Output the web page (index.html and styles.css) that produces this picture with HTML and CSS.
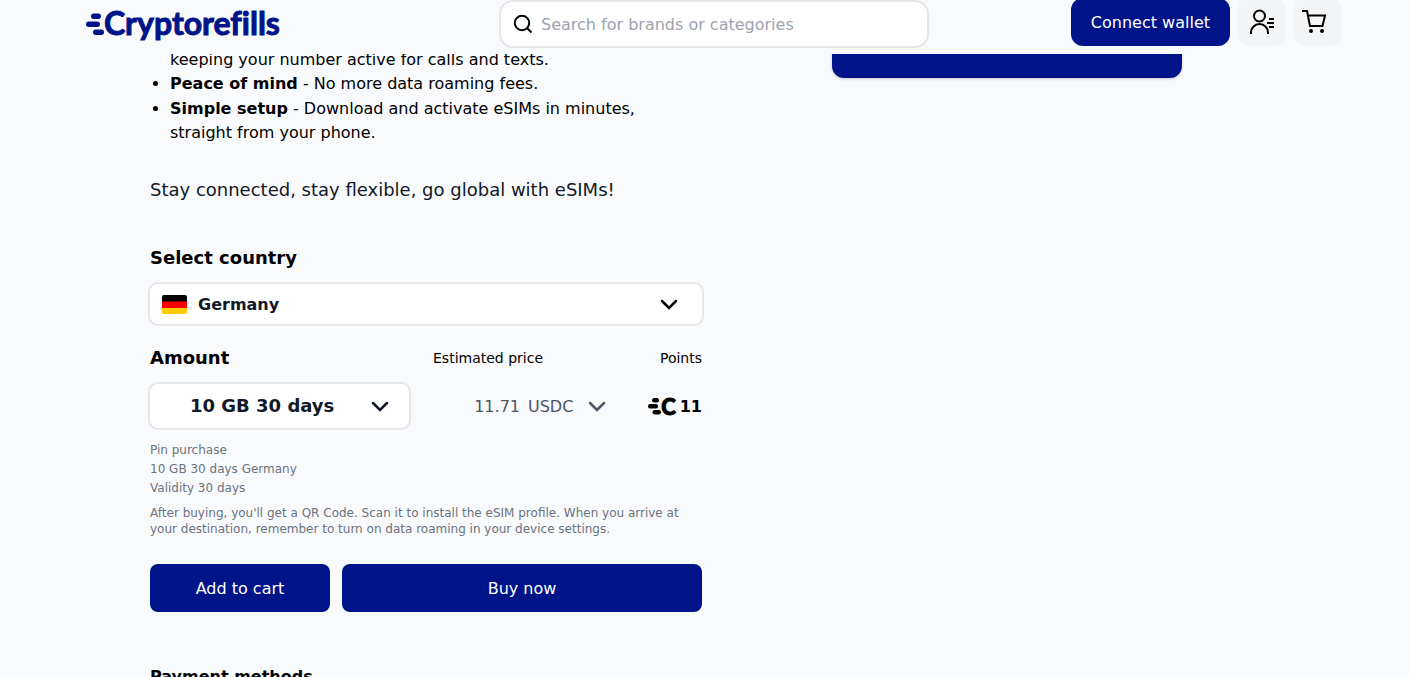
FILE: index.html
```html
<!DOCTYPE html>
<html lang="en">
<head>
    <meta charset="UTF-8">
    <meta name="viewport" content="width=device-width, initial-scale=1.0">
    <title>eSIM Germany - Cryptorefills</title>
    <link rel="stylesheet" href="styles.css">
</head>
<body>

    <!-- Header -->
    <header class="header">
        <a href="#" class="logo">
            <svg class="logo-bars" width="18" height="24" viewBox="0 0 18 24" aria-hidden="true">
                <rect x="5" y="1.500" width="10" height="5.500" rx="2.750"/>
                <rect x="0" y="9.500" width="14" height="5.500" rx="2.750"/>
                <rect x="7" y="17.500" width="11" height="5.500" rx="2.750"/>
            </svg>
            <span class="logo-text">Cryptorefills</span>
        </a>

        <form class="search">
            <svg width="20" height="20" viewBox="0 0 20 20" aria-hidden="true">
                <circle cx="9" cy="9" r="7.200"/>
                <path d="M14.500 14.500L18.500 18.500"/>
            </svg>
            <input type="search" aria-label="Search" placeholder="Search for brands or categories">
        </form>

        <div class="actions">
            <button class="btn btn-wallet">Connect wallet</button>
            <button class="btn-icon" aria-label="Account">
                <svg width="28" height="28" viewBox="0 0 28 28" aria-hidden="true">
                    <circle cx="11.500" cy="8" r="5.500"/>
                    <path d="M3 26v-1.500a8.500 8.500 0 0 1 17 0V26"/>
                    <path d="M21 11h5M19 15h7M21 19h5"/>
                </svg>
            </button>
            <button class="btn-icon" aria-label="Cart">
                <svg width="32" height="32" viewBox="0 0 32 32" aria-hidden="true">
                    <path d="M0 5h5l3 15h12.500L23 9.500H6"/>
                    <circle class="wheel" cx="9" cy="25" r="2"/>
                    <circle class="wheel" cx="20" cy="25" r="2"/>
                </svg>
            </button>
        </div>
    </header>

    <main class="container">
        <section class="product">
            <ul class="benefits">
                <li class="continued">keeping your number active for calls and texts.</li>
                <li><strong>Peace of mind</strong> - No more data roaming fees.</li>
                <li><strong>Simple setup</strong> - Download and activate eSIMs in minutes, straight from your phone.</li>
            </ul>
            <p class="tagline">Stay connected, stay flexible, go global with eSIMs!</p>

            <!-- Country -->
            <label class="title" for="country">Select country</label>
            <div class="select-box country">
                <svg class="flag" width="25" height="19" viewBox="0 0 25 19" aria-hidden="true">
                    <clipPath id="flag-clip"><rect width="25" height="19" rx="2"/></clipPath>
                    <g clip-path="url(#flag-clip)">
                        <rect width="25" height="7" fill="#000"/>
                        <rect y="6.500" width="25" height="6.500" fill="#f00"/>
                        <rect y="13" width="25" height="6" fill="#fc0"/>
                    </g>
                </svg>
                <select id="country">
                    <option>Germany</option>
                </select>
                <svg class="chevron" width="18" height="12" viewBox="0 0 18 12" aria-hidden="true"><path d="M2 3l7 7 7-7"/></svg>
            </div>

            <!-- Amount and price -->
            <div class="order">
                <div class="order-amount">
                    <label class="title" for="amount">Amount</label>
                    <div class="select-box amount">
                        <select id="amount">
                            <option>10 GB 30 days</option>
                        </select>
                        <svg class="chevron" width="18" height="12" viewBox="0 0 18 12" aria-hidden="true"><path d="M2 3l7 7 7-7"/></svg>
                    </div>
                </div>
                <div class="order-price">
                    <label class="caption" for="currency">Estimated price</label>
                    <div class="price">
                        <span>11.71</span>
                        <select id="currency">
                            <option>USDC</option>
                        </select>
                        <svg class="chevron" width="18" height="12" viewBox="0 0 18 12" aria-hidden="true"><path d="M2 2l7 7 7-7"/></svg>
                    </div>
                </div>
                <div class="order-points">
                    <span class="caption">Points</span>
                    <div class="points">
                        <svg width="13" height="18" viewBox="0 0 13 18" aria-hidden="true">
                            <rect x="4" y="0" width="7" height="4.500" rx="2.200"/>
                            <rect x="0" y="6" width="10" height="4.500" rx="2.200"/>
                            <rect x="4.500" y="12" width="8.500" height="4.500" rx="2.200"/>
                        </svg>
                        <span class="points-mark">C</span>
                        <span>11</span>
                    </div>
                </div>
            </div>

            <div class="details">
                <p>Pin purchase</p>
                <p>10 GB 30 days Germany</p>
                <p>Validity 30 days</p>
                <p class="details-note">After buying, you'll get a QR Code. Scan it to install the eSIM profile. When you arrive at your destination, remember to turn on data roaming in your device settings.</p>
            </div>

            <div class="buy-row">
                <button class="btn">Add to cart</button>
                <button class="btn">Buy now</button>
            </div>

            <h2 class="payment-title">Payment methods</h2>
        </section>

        <aside class="brand-card"></aside>
    </main>

</body>
</html>
```
FILE: styles.css
```css
* {
    box-sizing: border-box;
}

body {
    font-family: "DejaVu Sans", sans-serif;
    font-size: 16px;
    line-height: 24px;
    margin: 0;
    height: 100vh;
    overflow: hidden;
    color: #000;
    background-color: #f9fafc;
}

p, ul, h2 {
    margin: 0;
    padding: 0;
}

button, input, select {
    font: inherit;
    color: inherit;
}

svg {
    flex-shrink: 0;
}

/* Header */
.header {
    position: fixed;
    top: 0;
    left: 0;
    right: 0;
    z-index: 10;
    display: grid;
    grid-template-columns: 1fr 430px 1fr;
    align-items: start;
    height: 54px;
    padding: 0 67px 0 86px;
    background-color: #f9fafc;
}

.logo {
    display: flex;
    align-items: center;
    height: 48px;
    color: #001489;
    text-decoration: none;
}

.logo-bars {
    fill: #001489;
}

.logo-text {
    font-family: Lato, sans-serif;
    font-size: 32px;
    font-weight: 700;
    font-variant-ligatures: none;
    -webkit-text-stroke: 1px #001489;
    stroke-linejoin: round;
    padding-bottom: 2px;
}

.search {
    display: flex;
    align-items: center;
    gap: 8px;
    height: 48px;
    padding: 0 12px;
    background-color: #fff;
    border: 2px solid #e5e7eb;
    border-radius: 14px;
}

.search svg {
    fill: none;
    stroke: #000;
    stroke-width: 2;
}

.search input {
    flex: 1;
    min-width: 0;
    padding: 2px 0 0;
    border: none;
    outline: none;
    background: none;
}

.search input::placeholder {
    color: #9ca3af;
}

.actions {
    display: flex;
    justify-content: flex-end;
    gap: 8px;
    margin-top: -2px;
}

.btn {
    height: 48px;
    padding: 2px 20px 0;
    background-color: #001489;
    color: #fff;
    border: none;
    border-radius: 8px;
    cursor: pointer;
}

.btn-wallet {
    border-radius: 12px;
}

.btn-icon {
    display: flex;
    align-items: center;
    justify-content: center;
    width: 48px;
    height: 48px;
    padding: 0;
    background-color: #f3f4f6;
    border: none;
    border-radius: 12px;
    cursor: pointer;
}

.btn-icon svg {
    fill: none;
    stroke: #000;
    stroke-width: 2;
}

.btn-icon .wheel {
    fill: #000;
    stroke: none;
}

/* Page */
.container {
    display: grid;
    grid-template-columns: 552px 350px;
    gap: 130px;
    align-items: start;
    max-width: 1109px;
    margin: 0 auto;
    padding-top: 48px;
}

.benefits {
    padding-left: 20px;
}

.benefits li {
    max-width: 480px;
}

.benefits li:last-child {
    margin-top: 1px;
}

.benefits .continued {
    list-style: none;
}

.tagline {
    margin: 31px 0 40px;
    font-size: 18px;
    line-height: 28px;
    color: #111827;
}

.title {
    display: block;
    margin-bottom: 10px;
    font-size: 18px;
    font-weight: 700;
    line-height: 28px;
}

.select-box {
    position: relative;
    display: flex;
    align-items: center;
    margin: 0 -2px;
    background-color: #fff;
    border: 2px solid #e5e7eb;
    border-radius: 10px;
    color: #111827;
}

select {
    appearance: none;
    border: none;
    outline: none;
    background: none;
    padding: 0;
    cursor: pointer;
}

.select-box select {
    width: 100%;
    height: 100%;
    font-weight: 700;
}

.chevron {
    fill: none;
    stroke: currentColor;
    stroke-width: 2.5;
    stroke-linecap: round;
    pointer-events: none;
}

.select-box .chevron {
    position: absolute;
    right: 20px;
}

.country {
    height: 44px;
}

.country .flag {
    position: absolute;
    left: 12px;
    pointer-events: none;
}

.country select {
    padding-top: 2px;
    padding-left: 48px;
}

.country .chevron {
    right: 24px;
    color: #000;
}

.order {
    display: flex;
    margin-top: 18px;
}

.order-amount {
    width: 259px;
}

.amount {
    height: 48px;
}

.amount select {
    padding-left: 40px;
    font-size: 18px;
}

.caption {
    display: block;
    margin-bottom: 10px;
    font-size: 14px;
    line-height: 28px;
}

.order-price {
    width: 173px;
    margin-left: 24px;
}

.price {
    display: flex;
    align-items: center;
    justify-content: flex-end;
    gap: 8px;
    height: 48px;
    padding-top: 2px;
    color: #4b5563;
}

.price .chevron {
    margin-left: 6px;
}

.order-points {
    margin-left: auto;
    text-align: right;
}

.points {
    display: flex;
    align-items: center;
    justify-content: flex-end;
    height: 48px;
    padding-top: 2px;
    font-weight: 700;
}

.points-mark {
    margin-right: 4px;
    font-family: Lato, sans-serif;
    font-size: 22px;
    font-weight: 900;
    -webkit-text-stroke: 1px #000;
}

.details {
    display: flex;
    flex-direction: column;
    gap: 3px;
    margin-top: 12px;
    font-size: 12px;
    line-height: 16px;
    color: #6b7280;
}

.details-note {
    margin-top: 6px;
}

.buy-row {
    display: grid;
    grid-template-columns: 1fr 2fr;
    gap: 12px;
    margin-top: 27px;
}

.payment-title {
    margin-top: 53px;
    font-size: 16px;
    line-height: 24px;
}

.brand-card {
    height: 30px;
    background-color: #001489;
    border-radius: 0 0 12px 12px;
    box-shadow: 0 1px 3px rgba(0, 0, 0, 0.2);
}
```
